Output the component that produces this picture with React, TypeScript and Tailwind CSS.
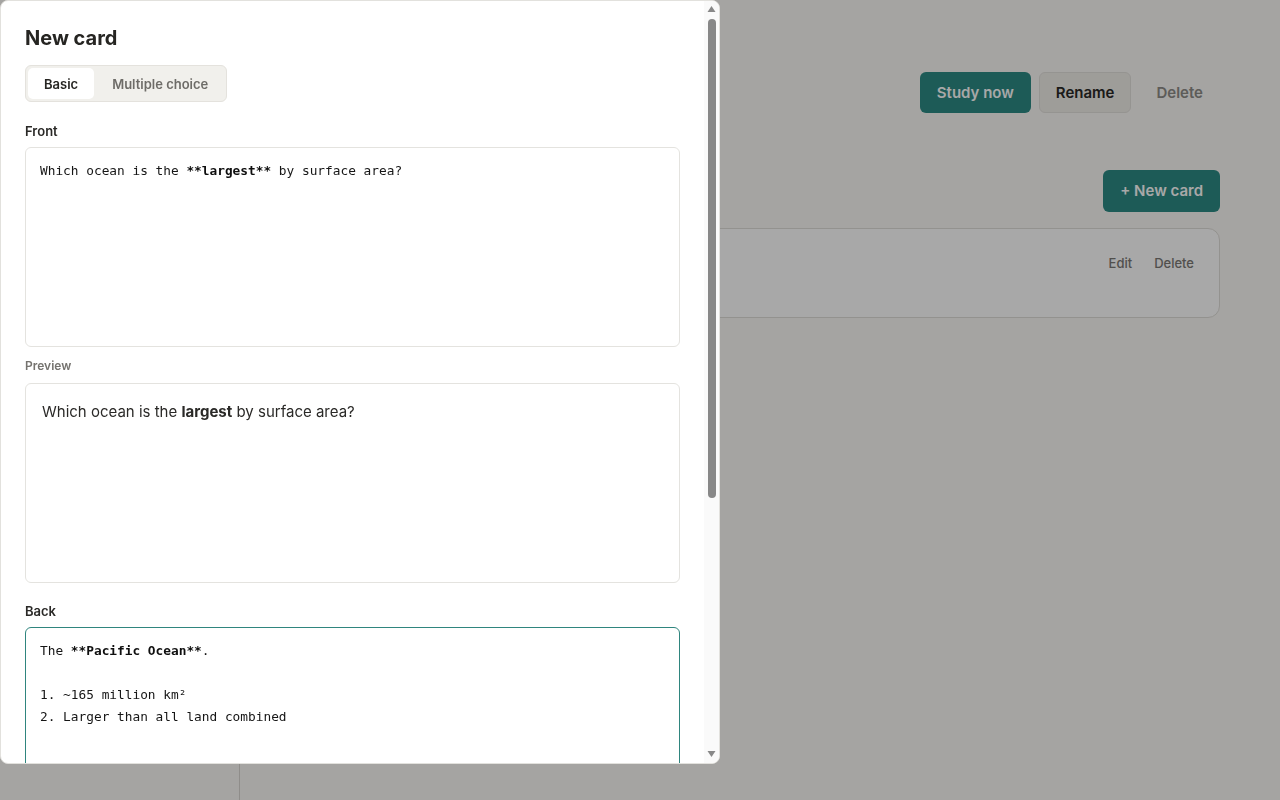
import React from "react";

const mono = { fontFamily: '"DejaVu Sans Mono", "Liberation Mono", monospace' };

function MdLine({ text }: { text: string }) {
  const parts = text.split(/(\*\*[^*]+\*\*)/g);
  return (
    <div className="min-h-[22px] whitespace-pre">
      {parts.map((p, i) =>
        p.startsWith("**") ? (
          <span key={i} className="font-bold text-[#0f0f0f]">
            {p}
          </span>
        ) : (
          <span key={i}>{p}</span>
        )
      )}
    </div>
  );
}

function Editor({ lines, focused }: { lines: string[]; focused?: boolean }) {
  return (
    <div
      className={`h-[200px] rounded-md border bg-white px-[14px] pb-[11px] pt-[12px] text-[12.8px] leading-[22px] text-[#161616] ${
        focused ? "border-[#2f857e]" : "border-[#e4e3df]"
      }`}
      style={mono}
    >
      {lines.map((l, i) => (
        <MdLine key={i} text={l} />
      ))}
    </div>
  );
}

function Label({ children }: { children: React.ReactNode }) {
  return <div className="mb-[7px] text-[13px] font-semibold leading-[18px] text-[#2a2927]">{children}</div>;
}

function PreviewLabel({ children }: { children: React.ReactNode }) {
  return (
    <div className="mb-[9px] mt-[11px] text-[12px] font-semibold leading-4 text-[#75736f]">{children}</div>
  );
}

function Scrollbar() {
  return (
    <div className="relative flex w-[15px] shrink-0 flex-col items-center bg-[#fafafa]">
      <svg width="9" height="8" viewBox="0 0 9 8" className="mt-[4px]">
        <path d="M4.5 1 L8.5 7 L0.5 7 Z" fill="#888888" />
      </svg>
      <div className="mt-[6px] h-[479px] w-[8px] rounded-full bg-[#888888]" />
      <div className="flex-1" />
      <svg width="9" height="8" viewBox="0 0 9 8" className="mb-[5px]">
        <path d="M0.5 1 L8.5 1 L4.5 7 Z" fill="#888888" />
      </svg>
    </div>
  );
}

export default function App() {
  return (
    <div
      className="relative h-[800px] w-[1280px] overflow-hidden bg-[#faf9f6]"
      style={{ fontFamily: 'Inter, "Noto Sans", sans-serif' }}
    >
      {/* Underlying page */}
      <div className="flex h-full">
        <aside className="flex w-[240px] shrink-0 flex-col gap-2 border-r border-[#d9d7d2] px-5 pt-6">
          <div className="text-[17px] font-bold text-[#262522]">Flashcards</div>
          <div className="mt-4 text-[13px] text-[#55534f]">Geography</div>
          <div className="text-[13px] text-[#55534f]">Spanish</div>
        </aside>
        <main className="flex flex-1 flex-col pl-[60px] pr-[60px] pt-[72px]">
          <div className="flex h-[41px] items-center justify-between">
            <div className="text-[24px] font-bold text-[#262522]">Geography</div>
            <div className="flex items-center gap-2">
              <button className="h-[41px] rounded-md bg-[#2c8a84] px-[17px] pt-[2px] text-[15px] font-semibold text-white">
                Study now
              </button>
              <button className="h-[41px] rounded-md border border-[#e3e1dc] bg-[#f0eee9] px-4 pt-[2px] text-[15px] font-semibold text-[#2a2927]">
                Rename
              </button>
              <button className="h-[41px] rounded-md px-[17px] pt-[2px] text-[15px] font-semibold text-[#8e8c88]">
                Delete
              </button>
            </div>
          </div>
          <div className="mt-[57px] flex h-[42px] items-center justify-between">
            <div className="text-[17px] font-semibold text-[#262522]">Cards</div>
            <button className="h-[42px] rounded-md bg-[#2c8a84] px-[17px] text-[15px] font-semibold text-white">
              + New card
            </button>
          </div>
          <div className="mt-4 flex items-start justify-between rounded-xl border border-[#e0ded9] bg-white py-6 pl-6 pr-[25px]">
            <div className="text-[14px] leading-5 text-[#2a2927]">
              <div>Capital of France?</div>
              <div className="text-[#7a7874]">Paris</div>
            </div>
            <div className="flex gap-[22px] text-[13px] font-medium leading-5 text-[#7b7975]">
              <span>Edit</span>
              <span>Delete</span>
            </div>
          </div>
        </main>
      </div>

      {/* Overlay */}
      <div className="fixed inset-0 bg-black/[0.34]" />

      {/* Modal */}
      <div className="fixed left-0 top-0 flex h-[764px] w-[720px] overflow-hidden rounded-lg border border-[#e2e1dd] bg-white">
        <div className="min-w-0 flex-1 overflow-hidden">
          <div className="px-6 pb-6 pt-[23px]">
            <h2 className="text-[20px] font-bold leading-7 text-[#262522]">New card</h2>
            <div className="mt-[13px] inline-flex gap-[2px] rounded-md border border-[#e4e2dd] bg-[#f1f0ec] p-[2px]">
              <button className="h-[31px] rounded-[5px] bg-white px-4 pt-[2px] text-[13px] font-semibold text-[#262522]">
                Basic
              </button>
              <button className="h-[31px] rounded-[5px] px-4 pt-[2px] text-[13px] font-semibold text-[#6e6c68]">
                Multiple choice
              </button>
            </div>

            <div className="mt-5">
              <Label>Front</Label>
              <Editor lines={["Which ocean is the **largest** by surface area?"]} />
              <PreviewLabel>Preview</PreviewLabel>
              <div className="h-[200px] rounded-md border border-[#e4e3df] bg-white p-4 text-[15px] leading-6 text-[#2a2927]">
                Which ocean is the <strong className="font-bold">largest</strong> by surface area?
              </div>
            </div>

            <div className="mt-[19px]">
              <Label>Back</Label>
              <Editor
                focused
                lines={["The **Pacific Ocean**.", "", "1. ~165 million km²", "2. Larger than all land combined"]}
              />
              <PreviewLabel>Preview</PreviewLabel>
              <div className="h-[200px] rounded-md border border-[#e4e3df] bg-white p-4 text-[15px] leading-6 text-[#2a2927]">
                <p>
                  The <strong className="font-bold">Pacific Ocean</strong>.
                </p>
                <ol className="mt-3 list-decimal pl-6">
                  <li>~165 million km²</li>
                  <li>Larger than all land combined</li>
                </ol>
              </div>
            </div>

            <div className="mt-7 flex justify-end gap-2">
              <button className="h-[41px] rounded-md border border-[#e3e1dc] bg-[#f0eee9] px-4 text-[15px] font-semibold text-[#2a2927]">
                Cancel
              </button>
              <button className="h-[41px] rounded-md bg-[#2c8a84] px-[17px] text-[15px] font-semibold text-white">
                Save card
              </button>
            </div>
          </div>
        </div>
        <Scrollbar />
      </div>
    </div>
  );
}
